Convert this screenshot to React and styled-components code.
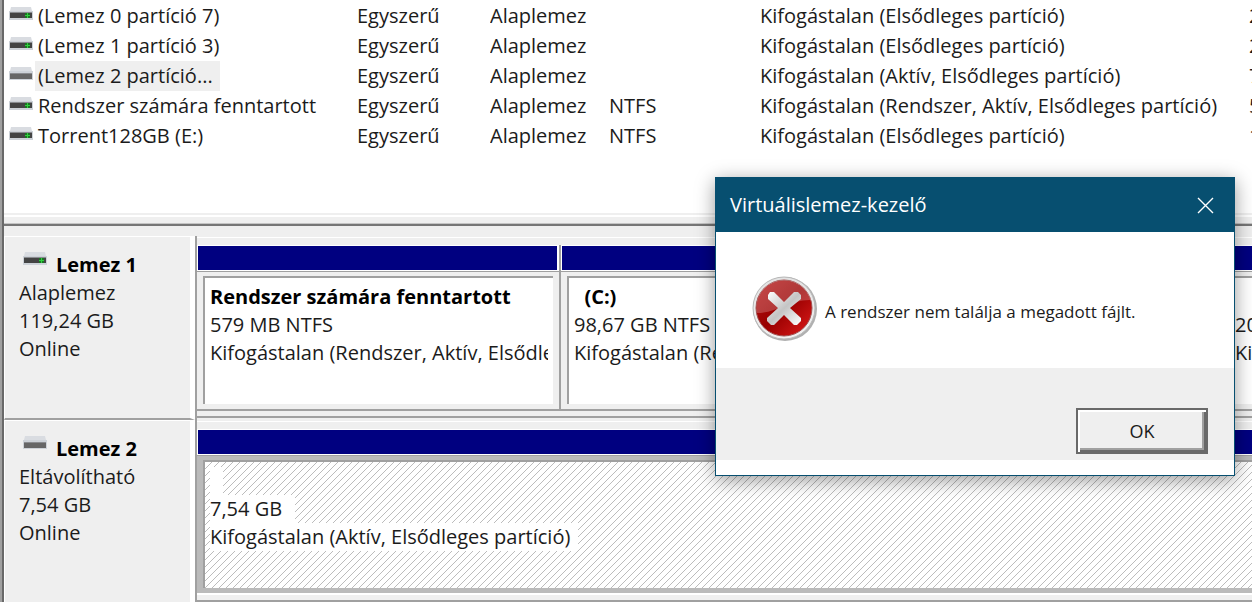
import styled, { createGlobalStyle } from "styled-components";

const GlobalStyle = createGlobalStyle`
  * {
    box-sizing: border-box;
  }

  body {
    margin: 0;
    background: #efefef;
    color: #1b1b1b;
    font: 20px/28px "Open Sans", "Noto Sans", sans-serif;
    overflow: hidden;
  }
`;

const Window = styled.div`
  position: relative;
  min-height: 100vh;
  border-left: 2px solid #a0a0a0;
  overflow: hidden;
`;

const Content = styled.main`
  border-left: 2px solid #696969;
`;

const VolumePane = styled.section`
  min-height: 213px;
  padding-top: 1px;
  background: #fff;
  overflow: hidden;
`;

const VolumeTable = styled.table`
  width: 100%;
  table-layout: fixed;
  border-collapse: collapse;

  td {
    height: 30px;
    padding: 0;
    white-space: nowrap;
    overflow: hidden;
  }
`;

const Col = styled.col`
  width: ${({ $width }) => ($width ? `${$width}px` : "auto")};
`;

const VolumeName = styled.div`
  display: flex;
  align-items: center;
  gap: 2px;
  padding-left: 5px;

  svg {
    margin-bottom: 5px;
  }
`;

const NameText = styled.span`
  height: 30px;
  padding: 0 7px 0 3px;
  line-height: 30px;
  background: ${({ $selected }) => ($selected ? "#efefef" : "transparent")};
`;

const Splitter = styled.div`
  height: 13px;
  border-top: 2px solid #efefef;
  border-bottom: 2px solid #767676;
  background: #efefef;
  box-shadow: inset 0 2px #fff, inset 0 -1px #c4c4c4;
`;

const DiskList = styled.section`
  padding-top: 10px;
`;

const DiskRow = styled.article`
  display: grid;
  grid-template-columns: 191px 1fr;
  height: 184px;
`;

const DiskInfo = styled.div`
  padding: 14px 0 0 14px;
  border: 1px solid #fff;
  border-right: 5px solid #fff;
  border-bottom: 2px solid #a0a0a0;
  box-shadow: 2px 0 #a0a0a0;

  p {
    margin: 0;
  }
`;

const DiskHeader = styled.header`
  display: flex;
  gap: 9px;
  padding-left: 4px;
`;

const DiskTitle = styled.h2`
  margin: 0;
  color: #000;
  font-size: 20px;
  font-weight: 700;
`;

/* the last partition runs on past the right edge of the window */
const Partitions = styled.div`
  display: grid;
  grid-template-columns: ${({ $columns }) => $columns};
  margin: 1px -40px 2px 2px;
  padding: 7px 0 5px;
  border-top: 1px solid #fff;
  border-bottom: 2px solid #a0a0a0;
  overflow: hidden;
`;

const Partition = styled.div`
  display: flex;
  flex-direction: column;
  min-width: 0;
  border-right: 2px solid #a0a0a0;
  border-bottom: 2px solid ${({ $selected }) => ($selected ? "#fff" : "#a0a0a0")};
`;

const Stripe = styled.div`
  height: 26px;
  border: 1px solid #fff;
  border-right-width: 2px;
  background: #000080;
`;

const PartitionFrame = styled.div`
  flex: 1;
  min-height: 0;
  padding: 4px 6px 5px;
  border-top: 1px solid #a0a0a0;
  background: ${({ $selected }) => ($selected ? "#bababa" : "#efefef")};
`;

const PartitionBody = styled.div`
  height: 100%;
  padding: 5px 5px 0;
  border-top: 2px solid #a0a0a0;
  border-left: 2px solid #a0a0a0;
  background: ${({ $selected }) =>
    $selected
      ? "linear-gradient(135deg, #fff 43%, #bcbcbc 43% 57%, #fff 57%) 0 0 / 7px 7px"
      : "#fff"};

  p,
  h3 {
    width: fit-content;
    max-width: 100%;
    min-height: 28px;
    margin: 0;
    padding-right: ${({ $selected }) => ($selected ? "8px" : "0")};
    font-size: 20px;
    background: #fff;
    white-space: pre;
    overflow: hidden;
  }

  h3 {
    color: #000;
    font-weight: 700;
  }
`;

const Dialog = styled.section`
  position: absolute;
  top: 177px;
  left: 713px;
  display: flex;
  flex-direction: column;
  width: 520px;
  height: 299px;
  border: 1px solid #074f70;
  background: #fff;
  box-shadow: 0 4px 18px rgba(0, 0, 0, 0.4);
`;

const TitleBar = styled.header`
  display: flex;
  align-items: center;
  justify-content: space-between;
  height: 54px;
  padding: 0 14px;
  color: #fff;
  background: #074f70;

  h1 {
    margin: 0;
    font-size: 20px;
    font-weight: 400;
  }
`;

const CloseButton = styled.button`
  display: flex;
  padding: 6px;
  border: 0;
  color: #fff;
  background: transparent;
`;

const Message = styled.div`
  display: flex;
  flex: 1;
  align-items: center;
  gap: 7px;
  padding: 18px 36px 0;

  p {
    margin: 6px 0 0;
    font-size: 17px;
    white-space: nowrap;
  }
`;

const Actions = styled.footer`
  display: flex;
  justify-content: flex-end;
  align-items: flex-end;
  height: 92px;
  margin-bottom: 15px;
  padding: 0 26px 6px;
  background: #efefef;
`;

const OkButton = styled.button`
  width: 132px;
  height: 46px;
  border: 2px solid #696969;
  color: #1b1b1b;
  background: #efefef;
  box-shadow: inset 2px 2px #fff, inset -2px -2px #696969, inset -4px -4px #a0a0a0;
  font: inherit;
  font-size: 18px;
`;

const volumes = [
  { name: "(Lemez 0 partíció 7)", fs: "", status: "Kifogástalan (Elsődleges partíció)", size: "2" },
  { name: "(Lemez 1 partíció 3)", fs: "", status: "Kifogástalan (Elsődleges partíció)", size: "2" },
  { name: "(Lemez 2 partíció...", fs: "", status: "Kifogástalan (Aktív, Elsődleges partíció)", size: "7", removable: true },
  { name: "Rendszer számára fenntartott", fs: "NTFS", status: "Kifogástalan (Rendszer, Aktív, Elsődleges partíció)", size: "5" },
  { name: "Torrent128GB (E:)", fs: "NTFS", status: "Kifogástalan (Elsődleges partíció)", size: "1" },
];

const disks = [
  {
    name: "Lemez 1",
    type: "Alaplemez",
    size: "119,24 GB",
    columns: "364px 1fr 70px",
    partitions: [
      { name: "Rendszer számára fenntartott", size: "579 MB NTFS", status: "Kifogástalan (Rendszer, Aktív, Elsődle" },
      { name: "  (C:)", size: "98,67 GB NTFS", status: "Kifogástalan (Rendszerindítás)" },
      { name: "", size: "20", status: "Ki" },
    ],
  },
  {
    name: "Lemez 2",
    type: "Eltávolítható",
    size: "7,54 GB",
    removable: true,
    columns: "1fr",
    partitions: [
      { name: " ", size: "7,54 GB ", status: "Kifogástalan (Aktív, Elsődleges partíció)", selected: true },
    ],
  },
];

function DriveIcon({ removable }) {
  return (
    <svg width="24" height="15" viewBox="0 0 24 15" aria-hidden="true">
      <path d="M2 1h20l1 4H1z" fill="#d9dce1" />
      <path d="M0 5h24v9H0z" fill="#cdd2d8" />
      <path d={removable ? "M1 8h22v5H1z" : "M1 7h22v5H1z"} fill={removable ? "#666" : "#444"} />
      <path d={removable ? "M1 7h22v1H1z" : "M1 6h22v1H1z"} fill="#8a8c90" />
      {!removable && <path d="M16 7h5v5h-5z" fill="#1b7424" />}
      {!removable && <path d="M16 9h5v1h-5zM18 7h1v5h-1z" fill="#2fd23f" />}
    </svg>
  );
}

function ErrorIcon() {
  return (
    <svg width="66" height="66" viewBox="0 0 66 66" aria-hidden="true">
      <defs>
        <linearGradient id="red" x1="0" y1="0" x2="1" y2="1">
          <stop offset="0" stopColor="#b81414" />
          <stop offset="0.5" stopColor="#980000" />
          <stop offset="1" stopColor="#e01b1b" />
        </linearGradient>
        <linearGradient id="ring" x1="0" y1="0" x2="0" y2="1">
          <stop offset="0" stopColor="#e2e2e2" />
          <stop offset="1" stopColor="#f2f2f2" />
        </linearGradient>
        <linearGradient id="cross" x1="0" y1="0" x2="1" y2="1">
          <stop offset="0" stopColor="#fff" />
          <stop offset="0.5" stopColor="#c4c4c4" />
          <stop offset="1" stopColor="#fff" />
        </linearGradient>
      </defs>
      <circle cx="33" cy="33" r="32" fill="#b0b0b0" />
      <circle cx="32" cy="32" r="31" fill="url(#ring)" stroke="#b8b8b8" />
      <circle cx="32" cy="32" r="28" fill="url(#red)" stroke="#a05050" />
      <path d="M5 37C2 16 16 4 32 4c15 0 27 11 28 20-22-1-35 13-55 13z" fill="#fff" opacity="0.22" />
      <path
        d="M18 16h4l10 10 10-10h4l3 3v4L38 32l11 10v3l-4 4h-3L32 39 22 49h-3l-4-4v-3l11-10-10-9v-4z"
        fill="url(#cross)"
      />
    </svg>
  );
}

function App() {
  return (
    <Window>
      <GlobalStyle />
      <Content>
        <VolumePane>
          <VolumeTable>
            <colgroup>
              <Col $width={353} />
              <Col $width={133} />
              <Col $width={119} />
              <Col $width={151} />
              <Col />
              <Col $width={3} />
            </colgroup>
            <tbody>
              {volumes.map((volume) => (
                <tr key={volume.name}>
                  <td>
                    <VolumeName>
                      <DriveIcon removable={volume.removable} />
                      <NameText $selected={volume.removable}>{volume.name}</NameText>
                    </VolumeName>
                  </td>
                  <td>Egyszerű</td>
                  <td>Alaplemez</td>
                  <td>{volume.fs}</td>
                  <td>{volume.status}</td>
                  <td>{volume.size}</td>
                </tr>
              ))}
            </tbody>
          </VolumeTable>
        </VolumePane>
        <Splitter />
        <DiskList>
          {disks.map((disk) => (
            <DiskRow key={disk.name}>
              <DiskInfo>
                <DiskHeader>
                  <DriveIcon removable={disk.removable} />
                  <DiskTitle>{disk.name}</DiskTitle>
                </DiskHeader>
                <p>{disk.type}</p>
                <p>{disk.size}</p>
                <p>Online</p>
              </DiskInfo>
              <Partitions $columns={disk.columns}>
                {disk.partitions.map((part) => (
                  <Partition key={part.size} $selected={part.selected}>
                    <Stripe />
                    <PartitionFrame $selected={part.selected}>
                      <PartitionBody $selected={part.selected}>
                        <h3>{part.name}</h3>
                        <p>{part.size}</p>
                        <p>{part.status}</p>
                      </PartitionBody>
                    </PartitionFrame>
                  </Partition>
                ))}
              </Partitions>
            </DiskRow>
          ))}
        </DiskList>
      </Content>

      <Dialog role="dialog" aria-labelledby="dialog-title">
        <TitleBar>
          <h1 id="dialog-title">Virtuálislemez-kezelő</h1>
          <CloseButton type="button" aria-label="Bezárás">
            <svg width="17" height="17" viewBox="0 0 17 17" aria-hidden="true">
              <path d="M1 1l15 15M16 1L1 16" stroke="currentColor" strokeWidth="1.4" />
            </svg>
          </CloseButton>
        </TitleBar>
        <Message>
          <ErrorIcon />
          <p>A rendszer nem találja a megadott fájlt.</p>
        </Message>
        <Actions>
          <OkButton type="button">OK</OkButton>
        </Actions>
      </Dialog>
    </Window>
  );
}

export default App;
